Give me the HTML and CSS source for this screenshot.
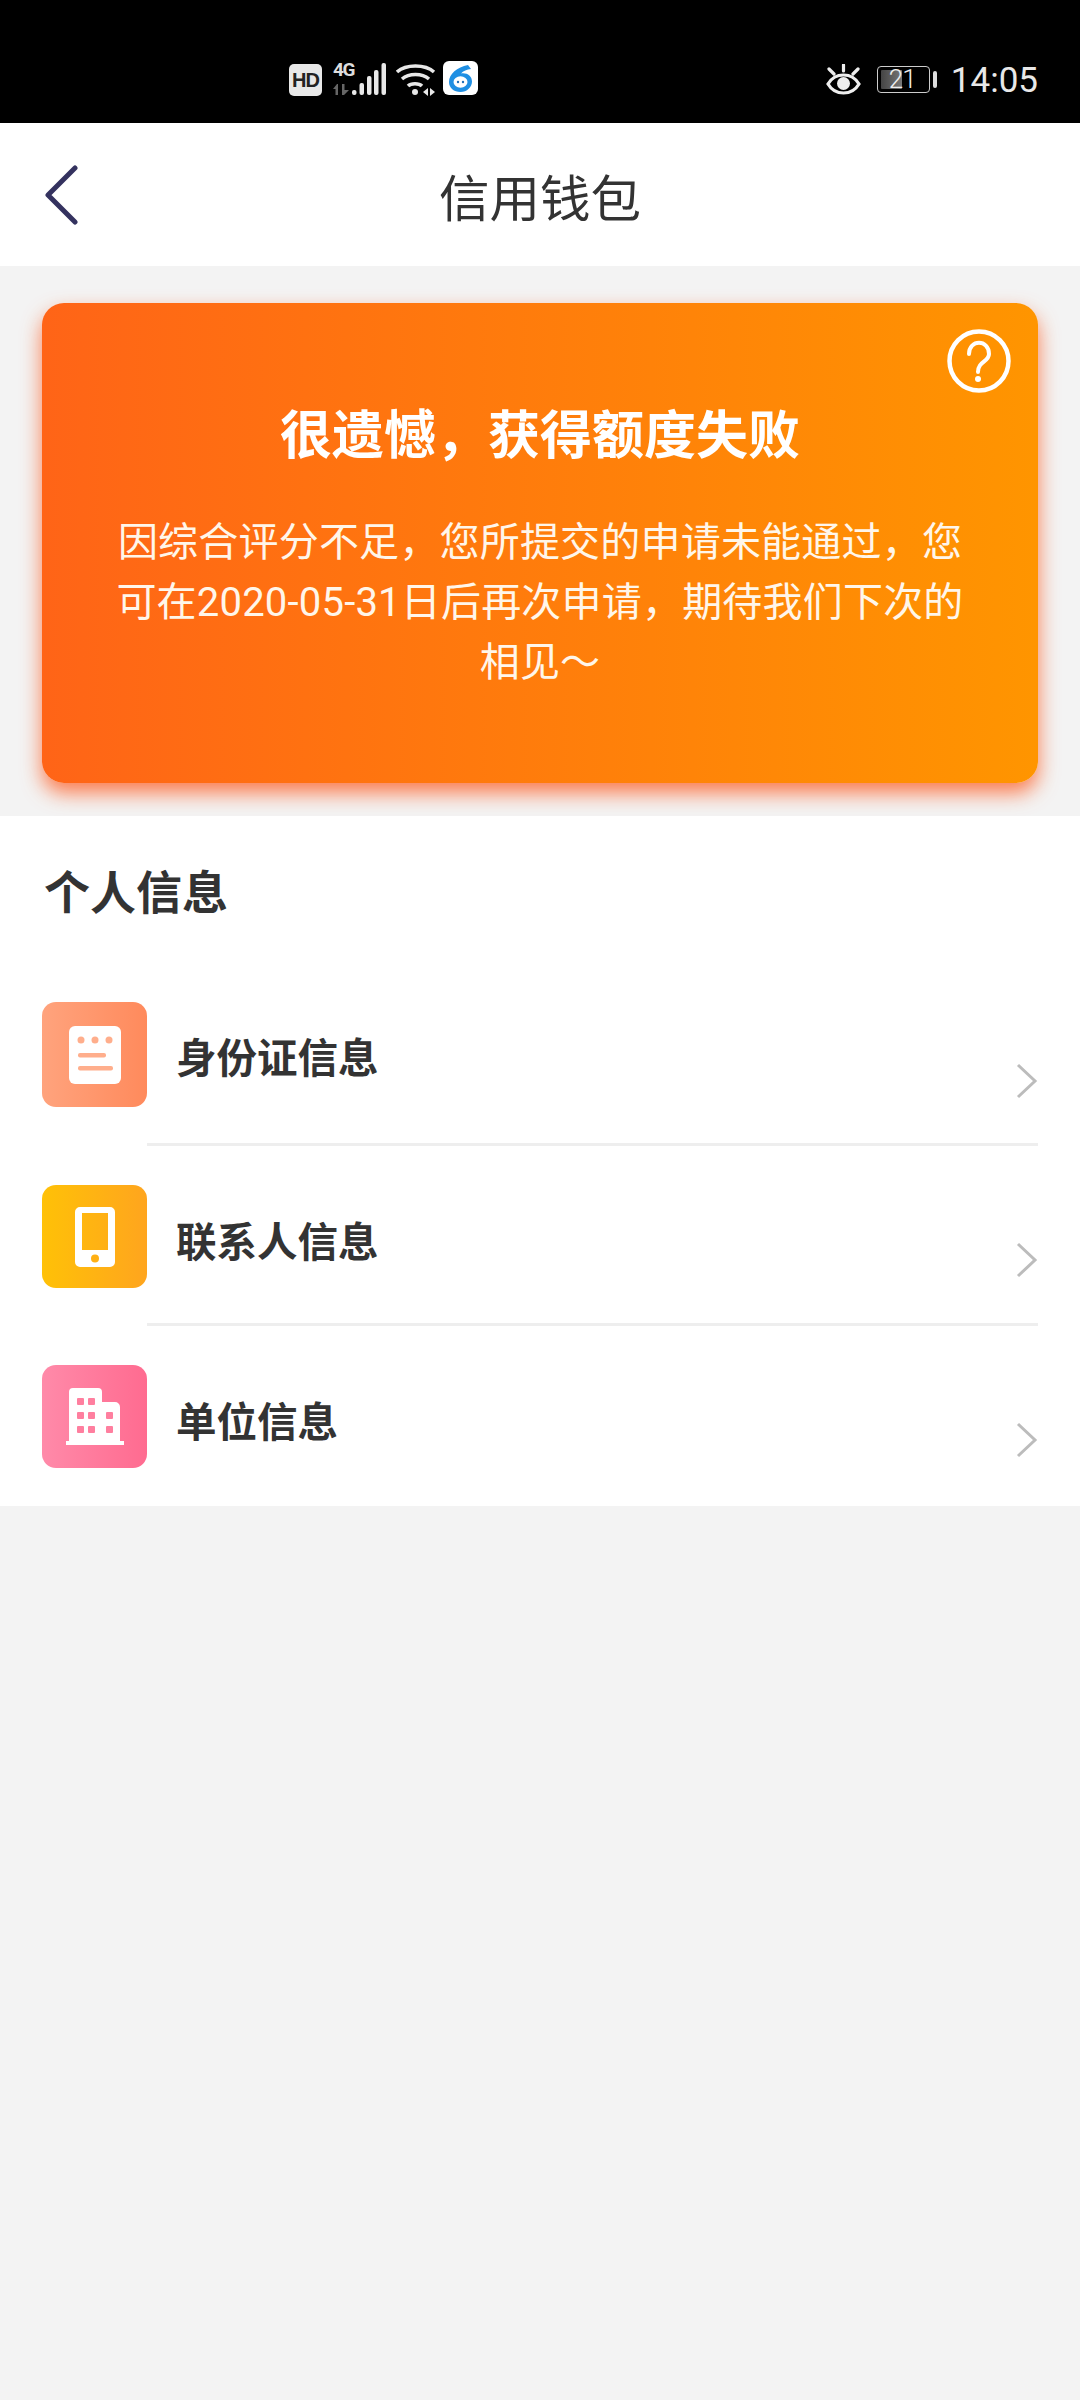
FILE: index.html
```html
<!DOCTYPE html>
<html lang="en">
<head>
  <meta charset="UTF-8">
  <title>信用钱包</title>
  <link rel="stylesheet" href="styles.css">
</head>
<body>

<div class="status-bar">
  <div class="status-left">
    <span class="hd">HD</span>
    <div class="signal">
      <div class="net">
        <span class="net-4g">4G</span>
        <svg class="net-arrows" width="16" height="11" viewBox="0 0 16 11">
          <path d="M4 0 L0 5 H2.500 V11 H5 V0 Z M9 0 H11.500 V6 H16 L11 11 H9 Z" fill="#666"/>
        </svg>
      </div>
      <svg class="bars" width="34" height="32" viewBox="0 0 34 32">
        <g fill="#e8e8e8">
          <rect x="0" y="27" width="4.500" height="5" rx="2"/>
          <rect x="7.500" y="20" width="4.500" height="12" rx="2"/>
          <rect x="15" y="13" width="4.500" height="19" rx="2"/>
          <rect x="22" y="7" width="4.500" height="25" rx="2"/>
          <rect x="29.500" y="0" width="4.500" height="32" rx="2"/>
        </g>
      </svg>
    </div>
    <svg class="wifi" width="40" height="32" viewBox="0 0 40 32">
      <g fill="none" stroke="#e8e8e8" stroke-width="3.500">
        <path d="M1 8 C10 0 29 0 38 8"/>
        <path d="M6 15 C13 9 26 9 33 15"/>
        <path d="M12 22 C15 19 23 19 26 22"/>
      </g>
      <circle cx="19" cy="28" r="3" fill="#e8e8e8"/>
      <path d="M27 28 L32 24 V32 Z M34 24 L39 28 L34 32 Z" fill="#e8e8e8"/>
    </svg>
    <svg class="app" width="35" height="34" viewBox="0 0 35 34">
      <rect width="35" height="34" rx="6" fill="#fff"/>
      <path d="M25 4 C14 6 6 13 6 21 C6 27 11 31 17.500 31 C24 31 29 26 29 20.500 C29 15 24 11.500 18 12.500 C20 10 24 8.500 28 8 Z" fill="#1f8fe3"/>
      <ellipse cx="17.500" cy="21" rx="7" ry="5.800" fill="#fff"/>
      <circle cx="15" cy="21" r="1.200" fill="#1f6fb8"/>
      <circle cx="20" cy="21" r="1.200" fill="#1f6fb8"/>
    </svg>
  </div>
  <div class="status-right">
    <svg class="eye" width="35" height="31" viewBox="0 0 35 31">
      <g fill="none" stroke="#eee" stroke-width="3.200" stroke-linecap="round">
        <path d="M2 20 C9 8 26 8 33 20 C26 32 9 32 2 20 Z"/>
        <path d="M17.500 1 V7 M3 5 L8 10 M32 5 L27 10"/>
      </g>
      <circle cx="17.500" cy="19.500" r="6.500" fill="#eee"/>
    </svg>
    <div class="battery">
      <div class="battery-box">
        <div class="battery-fill"></div>
        <span class="battery-num">21</span>
      </div>
      <div class="battery-tip"></div>
    </div>
    <span class="clock">14:05</span>
  </div>
</div>

<header class="nav">
  <svg class="back" width="38" height="60" viewBox="0 0 38 60">
    <path d="M33 3 L6 30 L33 57" fill="none" stroke="#34325f" stroke-width="5" stroke-linecap="round" stroke-linejoin="round"/>
  </svg>
  <h1 class="nav-title">信用钱包</h1>
</header>

<div class="banner-wrap">
  <div class="banner">
    <svg class="help" width="64" height="64" viewBox="0 0 64 64">
      <circle cx="32" cy="32" r="29.500" fill="none" stroke="#fff" stroke-width="4.500"/>
      <path d="M22 25 C22 10 42 10 42 25 C42 33 31 32 31 43" fill="none" stroke="#fff" stroke-width="4" stroke-linecap="round"/>
      <circle cx="31" cy="50" r="3" fill="#fff"/>
    </svg>
    <h2 class="banner-title">很遗憾，获得额度失败</h2>
    <p class="banner-text">因综合评分不足，您所提交的申请未能通过，您可在2020-05-31日后再次申请，期待我们下次的相见～</p>
  </div>
</div>

<section class="info">
  <h3 class="info-title">个人信息</h3>

  <div class="row row-first">
    <div class="row-icon icon-id">
      <svg width="52" height="58" viewBox="0 0 52 58">
        <rect width="52" height="58" rx="6" fill="#fff"/>
        <g fill="#ffae8c">
          <circle cx="12" cy="14" r="3.500"/>
          <circle cx="26" cy="14" r="3.500"/>
          <circle cx="40" cy="14" r="3.500"/>
          <rect x="9" y="27" width="28" height="4.500" rx="2"/>
          <rect x="9" y="40" width="35" height="4.500" rx="2"/>
        </g>
      </svg>
    </div>
    <div class="row-body">
      <span class="row-label">身份证信息</span>
      <svg class="chevron" width="22" height="36" viewBox="0 0 22 36"><path d="M2 2 L19 18 L2 34" fill="none" stroke="#bcbcbc" stroke-width="3"/></svg>
    </div>
  </div>

  <div class="row">
    <div class="row-icon icon-phone">
      <svg width="40" height="60" viewBox="0 0 40 60">
        <path fill-rule="evenodd" fill="#fff" d="M5 0 H35 A5 5 0 0 1 40 5 V55 A5 5 0 0 1 35 60 H5 A5 5 0 0 1 0 55 V5 A5 5 0 0 1 5 0 Z M7 6 V43 H33 V6 Z"/>
        <circle cx="20" cy="51.500" r="4" fill="#ffb014"/>
      </svg>
    </div>
    <div class="row-body">
      <span class="row-label">联系人信息</span>
      <svg class="chevron" width="22" height="36" viewBox="0 0 22 36"><path d="M2 2 L19 18 L2 34" fill="none" stroke="#bcbcbc" stroke-width="3"/></svg>
    </div>
  </div>

  <div class="row row-last">
    <div class="row-icon icon-work">
      <svg width="58" height="57" viewBox="0 0 58 57">
        <path fill="#fff" d="M3 4 A4 4 0 0 1 7 0 H32 A4 4 0 0 1 36 4 V14 H49 A5 5 0 0 1 54 19 V53 H58 V57 H0 V53 H3 Z"/>
        <g fill="#ff7f9f">
          <rect x="11" y="10" width="7" height="7" rx="1"/>
          <rect x="22" y="10" width="7" height="7" rx="1"/>
          <rect x="11" y="24" width="7" height="7" rx="1"/>
          <rect x="22" y="24" width="7" height="7" rx="1"/>
          <rect x="40" y="24" width="7" height="7" rx="1"/>
          <rect x="11" y="38" width="7" height="7" rx="1"/>
          <rect x="22" y="38" width="7" height="7" rx="1"/>
          <rect x="40" y="38" width="7" height="7" rx="1"/>
        </g>
      </svg>
    </div>
    <div class="row-body">
      <span class="row-label">单位信息</span>
      <svg class="chevron" width="22" height="36" viewBox="0 0 22 36"><path d="M2 2 L19 18 L2 34" fill="none" stroke="#bcbcbc" stroke-width="3"/></svg>
    </div>
  </div>
</section>

</body>
</html>
```

FILE: styles.css
```css
* {
  box-sizing: border-box;
}

body {
  margin: 0;
  height: 2400px;
  overflow: hidden;
  background: #f3f3f3;
  font-family: "Liberation Sans", "Noto Sans CJK SC", sans-serif;
  color: #333;
}

/* status bar */
.status-bar {
  height: 123px;
  background: #000;
  display: flex;
  justify-content: space-between;
  padding: 60px 42px 0 289px;
  color: #eee;
}

.status-left {
  display: flex;
  align-items: flex-start;
  height: 40px;
}

.hd {
  width: 33px;
  height: 32px;
  margin-top: 4px;
  background: #e8e8e8;
  border-radius: 5px;
  color: #222;
  font-family: "Liberation Sans", sans-serif;
  font-size: 20px;
  font-weight: bold;
  line-height: 32px;
  text-align: center;
  letter-spacing: -1px;
}

.signal {
  display: flex;
  align-items: flex-end;
  margin: 3px 0 0 11px;
  height: 32px;
}

.net {
  display: flex;
  flex-direction: column;
  width: 19px;
  height: 32px;
}

.net-4g {
  font-family: "Roboto", sans-serif;
  font-size: 19px;
  font-weight: bold;
  line-height: 14px;
  letter-spacing: -1.500px;
  color: #ddd;
}

.net-arrows {
  margin-top: 7px;
}

.wifi {
  margin: 4px 0 0 10px;
}

.app {
  margin: 1px 0 0 7px;
}

.status-right {
  display: flex;
  align-items: flex-start;
  height: 40px;
}

.eye {
  margin-top: 4px;
}

.battery {
  display: flex;
  align-items: center;
  height: 27px;
  margin: 6px 0 0 16px;
}

.battery-box {
  position: relative;
  width: 53px;
  height: 27px;
  border: 1.500px solid #ccc;
  border-radius: 4px;
  padding: 3px;
}

.battery-fill {
  width: 21px;
  height: 100%;
  background: linear-gradient(90deg, #444, #777);
  border-radius: 1px;
}

.battery-num {
  position: absolute;
  left: 11px;
  top: 0;
  font-family: "Roboto", sans-serif;
  font-size: 26px;
  font-weight: 300;
  line-height: 24px;
  letter-spacing: -1px;
  color: #eee;
}

.battery-tip {
  width: 4px;
  height: 17px;
  margin-left: 3px;
  background: #ddd;
  border-radius: 2px;
}

.clock {
  margin-left: 14px;
  font-family: "Roboto", sans-serif;
  font-size: 35px;
  line-height: 42px;
  color: #e8e8e8;
}

/* nav */
.nav {
  position: relative;
  height: 143px;
  background: #fff;
  display: flex;
  align-items: center;
  justify-content: center;
}

.back {
  position: absolute;
  left: 42px;
  top: 42px;
}

.nav-title {
  margin: 0;
  font-size: 50.500px;
  font-weight: normal;
  color: #333;
}

/* banner */
.banner-wrap {
  padding: 37px 42px 33px;
  background: #f3f3f3;
}

.banner {
  position: relative;
  height: 480px;
  padding: 100px 68px 0;
  border-radius: 22px;
  background: linear-gradient(90deg, #ff6417, #ff9500);
  box-shadow: 0 10px 20px rgba(255, 85, 25, 0.75);
  color: #fff;
  text-align: center;
}

.help {
  position: absolute;
  right: 27px;
  top: 26px;
}

.banner-title {
  margin: 0;
  font-size: 52px;
  font-weight: bold;
  line-height: 66px;
}

.banner-text {
  margin: 44px 0 0;
  font-family: "Roboto", "Noto Sans CJK SC", sans-serif;
  font-size: 40px;
  line-height: 60px;
  letter-spacing: 0.2px;
  color: #fff6ea;
}

/* personal info */
.info {
  position: relative;
  background: #fff;
  height: 690px;
  padding: 52px 42px 0;
}

.info-title {
  margin: 0 0 0 2px;
  font-size: 46px;
  font-weight: bold;
  line-height: 50px;
  color: #333;
}

.row {
  display: flex;
  height: 180px;
}

.row-first {
  margin-top: 84px;
  height: 144px;
}

.row-icon {
  flex: none;
  width: 105px;
  height: 103px;
  margin-top: 39px;
  border-radius: 14px;
  display: flex;
  align-items: center;
  justify-content: center;
}

.row-first .row-icon {
  height: 105px;
  margin-top: 0;
}

.icon-id {
  background: linear-gradient(90deg, #ffa37d, #ff8a5c);
}

.icon-phone {
  background: linear-gradient(90deg, #ffc107, #ffa51e);
}

.icon-work {
  background: linear-gradient(90deg, #ff8aa9, #ff6b90);
}

.row-body {
  position: relative;
  flex: 1;
  display: flex;
  border-bottom: 3px solid #eee;
  padding-left: 29px;
}

.row-last .row-body {
  border-bottom: none;
}

.row-label {
  margin-top: 69px;
  font-size: 40.500px;
  font-weight: bold;
  line-height: 56px;
  color: #333;
}

.row-first .row-label {
  margin-top: 29px;
}

.chevron {
  position: absolute;
  right: 0;
  top: 96px;
}

.row-first .chevron {
  top: 61px;
}
```
